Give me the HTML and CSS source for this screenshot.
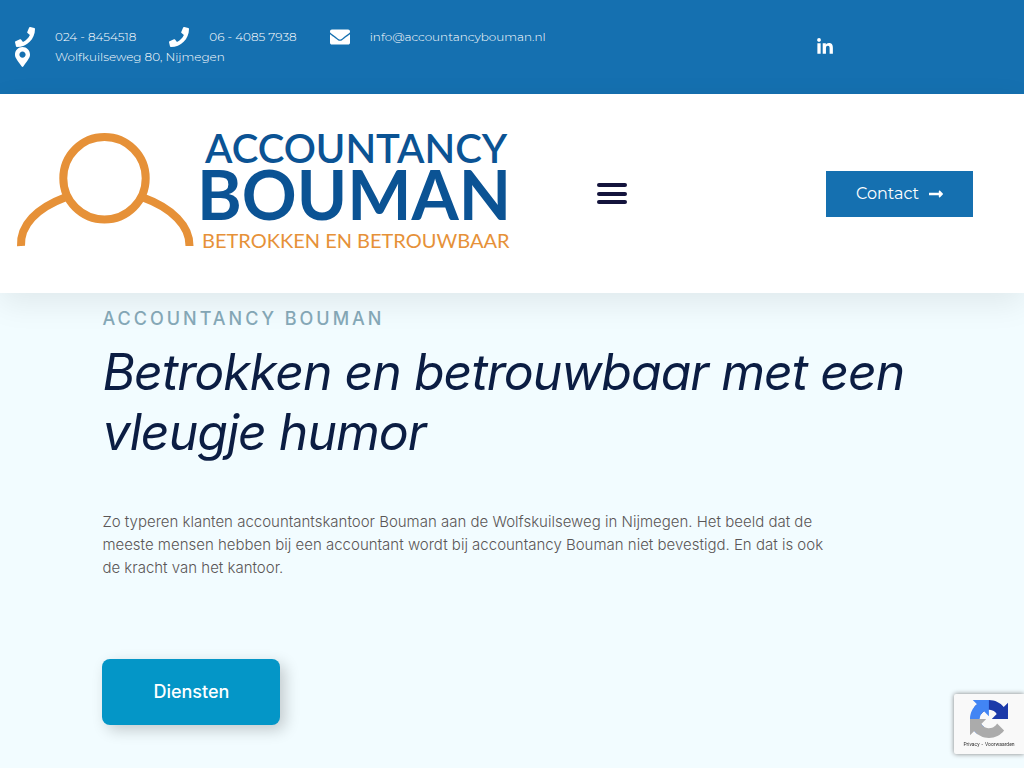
FILE: index.html
```html
<!DOCTYPE html>
<html lang="nl">
<head>
    <meta charset="UTF-8">
    <meta name="viewport" content="width=device-width, initial-scale=1.0">
    <title>Accountancy Bouman</title>
    <link rel="stylesheet" href="styles.css">
</head>
<body>
    <div class="topbar">
        <ul class="contact-list">
            <li>
                <a href="tel:0248454518">
                    <svg class="icon" viewBox="0 0 512 512"><path d="M493.4 24.6l-104-24c-11.3-2.6-22.9 3.3-27.5 13.9l-48 112c-4.2 9.8-1.4 21.3 6.9 28l60.6 49.6c-36 76.7-98.900 140.500-177.200 177.200l-49.600-60.600c-6.800-8.300-18.200-11.100-28-6.900l-112 48C3.900 366.500-2 378.100.6 389.400l24 104C27.100 504.200 36.700 512 48 512c256.100 0 464-207.500 464-464 0-11.200-7.700-20.900-18.600-23.400z"/></svg>
                    <span>024 - 8454518</span>
                </a>
            </li>
            <li>
                <a href="tel:0640857938">
                    <svg class="icon" viewBox="0 0 512 512"><path d="M493.4 24.6l-104-24c-11.3-2.6-22.9 3.3-27.5 13.9l-48 112c-4.2 9.8-1.4 21.3 6.9 28l60.6 49.6c-36 76.7-98.900 140.500-177.200 177.200l-49.600-60.600c-6.800-8.300-18.200-11.100-28-6.900l-112 48C3.900 366.500-2 378.100.6 389.400l24 104C27.100 504.200 36.700 512 48 512c256.100 0 464-207.500 464-464 0-11.200-7.700-20.900-18.600-23.400z"/></svg>
                    <span>06 - 4085 7938</span>
                </a>
            </li>
            <li>
                <a href="mailto:info@accountancybouman.nl">
                    <svg class="icon" viewBox="0 0 512 512"><path d="M502.3 190.800c3.900-3.100 9.700-.2 9.700 4.700V400c0 26.500-21.500 48-48 48H48c-26.500 0-48-21.500-48-48V195.600c0-5 5.700-7.800 9.700-4.700 22.400 17.400 52.100 39.500 154.100 113.600 21.100 15.400 56.700 47.800 92.200 47.600 35.700.3 72-32.800 92.300-47.600 102-74.100 131.600-96.300 154-113.700zM256 320c23.200.4 56.600-29.200 73.400-41.400 132.700-96.300 142.800-104.700 173.400-128.700 5.800-4.500 9.200-11.500 9.200-18.900v-19c0-26.500-21.500-48-48-48H48c-26.500 0-48 21.500-48 48v19c0 7.400 3.400 14.300 9.200 18.900 30.600 23.900 40.700 32.400 173.400 128.700 16.800 12.200 50.200 41.800 73.400 41.400z"/></svg>
                    <span>info@accountancybouman.nl</span>
                </a>
            </li>
            <li>
                <svg class="icon icon-pin" viewBox="0 0 384 512"><path d="M172.268 501.670C26.970 291.031 0 269.413 0 192 0 85.961 85.961 0 192 0s192 85.961 192 192c0 77.413-26.970 99.031-172.268 309.670-9.535 13.774-29.930 13.773-39.464 0zM192 272c44.183 0 80-35.817 80-80s-35.817-80-80-80-80 35.817-80 80 35.817 80 80 80z"/></svg>
                <span>Wolfkuilseweg 80, Nijmegen</span>
            </li>
        </ul>
        <div class="social">
            <a href="#" aria-label="LinkedIn">
                <svg viewBox="0 0 448 512"><path d="M100.280 448H7.400V148.900h92.880zM53.790 108.100C24.090 108.100 0 83.500 0 53.800a53.790 53.790 0 0 1 107.580 0c0 29.700-24.100 54.300-53.790 54.300zM447.900 448h-92.680V302.400c0-34.700-.7-79.200-48.290-79.200-48.290 0-55.690 37.700-55.690 76.700V448h-92.780V148.900h89.080v40.800h1.300c12.400-23.500 42.690-48.300 87.880-48.300 94 0 111.280 61.900 111.280 142.300V448z"/></svg>
            </a>
        </div>
    </div>

    <header class="header">
        <a class="logo" href="#" aria-label="Accountancy Bouman">
            <svg viewBox="0 0 497 126">
                <g fill="none" stroke="#e69138" stroke-width="8">
                    <circle cx="89.500" cy="47.300" r="41.200"/>
                    <path d="M50 66.500C22 77 5 94 6 115"/>
                    <path d="M128 66.500C157 77 175 95 174.500 115"/>
                </g>
                <g class="logo-name">
                    <text class="logo-top" x="190" y="32">ACCOUNTANCY</text>
                    <text class="logo-main" x="182" y="89">BOUMAN</text>
                </g>
                <text class="logo-tagline" x="187" y="117">BETROKKEN EN BETROUWBAAR</text>
            </svg>
        </a>
        <button class="menu-toggle" aria-label="Menu">
            <svg viewBox="0 0 30 24"><rect y="1" width="30" height="4" rx="2"/><rect y="10" width="30" height="4" rx="2"/><rect y="18" width="30" height="4" rx="2"/></svg>
        </button>
        <div class="header-action">
            <a class="btn-contact" href="#">
                <span>Contact</span>
                <svg viewBox="0 0 448 512"><path d="M313.941 216H12c-6.627 0-12 5.373-12 12v56c0 6.627 5.373 12 12 12h301.941v46.059c0 21.382 25.851 32.090 40.971 16.971l86.059-86.059c9.373-9.373 9.373-24.569 0-33.941l-86.059-86.059c-15.119-15.119-40.971-4.411-40.971 16.971V216z"/></svg>
            </a>
        </div>
    </header>

    <main class="hero">
        <p class="eyebrow">Accountancy Bouman</p>
        <h1>Betrokken en betrouwbaar met een vleugje humor</h1>
        <p class="intro">Zo typeren klanten accountantskantoor Bouman aan de Wolfskuilseweg in Nijmegen. Het beeld dat de meeste mensen hebben bij een accountant wordt bij accountancy Bouman niet bevestigd. En dat is ook de kracht van het kantoor.</p>
        <a class="btn-services" href="#">Diensten</a>
    </main>

    <div class="recaptcha">
        <svg viewBox="0 0 64 64">
            <path fill="#1c3aa9" d="M64 31.955l-.033-1.370V4.687l-7.160 7.160C50.948 4.674 42.033.093 32.050.093c-10.400 0-19.622 4.960-25.458 12.640l11.736 11.860a15.550 15.550 0 0 1 4.754-5.334c2.050-1.600 4.952-2.906 8.968-2.906.485 0 .860.057 1.135.163 4.976.393 9.288 3.140 11.828 7.124l-8.307 8.307L64 31.953"/>
            <path fill="#4285f4" d="M31.862.094l-1.370.033H4.594l7.160 7.160C4.580 13.147 0 22.060 0 32.046c0 10.400 4.960 19.622 12.640 25.458L24.500 45.768a15.550 15.550 0 0 1-5.334-4.754c-1.600-2.050-2.906-4.952-2.906-8.968 0-.485.057-.860.163-1.135.393-4.976 3.140-9.288 7.124-11.828l8.307 8.307L31.860.095"/>
            <path fill="#ababab" d="M.001 32.045l.033 1.370v25.898l7.160-7.160c5.860 7.173 14.774 11.754 24.760 11.754 10.400 0 19.622-4.960 25.458-12.640l-11.736-11.860a15.550 15.550 0 0 1-4.754 5.334c-2.050 1.600-4.952 2.906-8.968 2.906-.485 0-.860-.057-1.135-.163-4.976-.393-9.288-3.140-11.828-7.124l8.307-8.307c-10.522.040-22.400.066-27.295-.005"/>
        </svg>
        <div class="recaptcha-links"><a href="#">Privacy</a><span>-</span><a href="#">Voorwaarden</a></div>
    </div>
</body>
</html>
```
FILE: styles.css
```css
* {
    box-sizing: border-box;
}
body {
    margin: 0;
    min-height: 100vh;
    font-family: Inter, sans-serif;
    background-color: #f2fcff;
}
a {
    color: inherit;
    text-decoration: none;
}
.topbar {
    display: flex;
    align-items: center;
    min-height: 94px;
    background-color: #1570b0;
    color: #fff;
}
.contact-list {
    display: flex;
    flex-wrap: wrap;
    column-gap: 33px;
    width: 75%;
    margin: 0;
    padding: 0 15px;
    list-style: none;
    font-family: Montserrat, Inter, sans-serif;
    font-size: 12px;
    font-weight: 300;
    line-height: 20px;
}
.contact-list li,
.contact-list a {
    display: flex;
    align-items: center;
}
.icon {
    width: 20px;
    height: 20px;
    margin-right: 20px;
    fill: #fff;
}
.icon-pin {
    width: 15px;
    margin-right: 25px;
}
.social {
    width: 25%;
    padding-left: 49px;
}
.social svg {
    display: block;
    width: 16px;
    height: 18px;
    fill: #fff;
}
.header {
    position: relative;
    display: grid;
    grid-template-columns: 50% 200px 1fr;
    align-items: center;
    padding: 37px 0 36px;
    background-color: #fff;
    box-shadow: 0 10px 30px rgba(0, 0, 0, 0.08);
}
.logo {
    padding-left: 15px;
}
.logo svg {
    display: block;
    width: 100%;
    height: auto;
    overflow: visible;
}
.logo text {
    font-family: Lato, sans-serif;
}
.logo-name {
    fill: #0b5394;
}
.logo-top {
    font-size: 40px;
    font-weight: 600;
}
.logo-main {
    font-size: 68px;
    font-weight: 700;
}
.logo-tagline {
    fill: #e69138;
    font-size: 20px;
    font-weight: 400;
}
.menu-toggle {
    justify-self: center;
    padding: 0;
    border: 0;
    background: none;
    cursor: pointer;
}
.menu-toggle svg {
    display: block;
    width: 30px;
    height: 24px;
    fill: #14143c;
}
.header-action {
    display: flex;
    justify-content: flex-end;
    padding-right: 51px;
}
.btn-contact {
    display: flex;
    align-items: center;
    gap: 10px;
    padding: 13px 30px;
    background-color: #1570b0;
    color: #fff;
    font-family: Montserrat, Inter, sans-serif;
    font-size: 16px;
    line-height: 20px;
}
.btn-contact svg {
    width: 14px;
    height: 16px;
    fill: #fff;
}
.hero {
    padding: 14px 10% 43px;
}
.eyebrow {
    margin: 0;
    color: #86a9b8;
    font-size: 18px;
    font-weight: 500;
    line-height: 24px;
    letter-spacing: 3px;
    text-transform: uppercase;
}
h1 {
    margin: 11px 0 48px;
    color: #0b1d43;
    font-size: 50px;
    font-style: italic;
    font-weight: 400;
    line-height: 60px;
    letter-spacing: -1px;
}
.intro {
    max-width: 740px;
    margin: 0 0 80px;
    color: #5a5656;
    font-size: 15px;
    font-weight: 300;
    line-height: 23px;
}
.btn-services {
    display: inline-block;
    padding: 21px 51px;
    border-radius: 8px;
    background-color: #0496c7;
    box-shadow: 5px 5px 15px rgba(0, 0, 0, 0.2);
    color: #fff;
    font-size: 18px;
    font-weight: 500;
    line-height: 24px;
}
.recaptcha {
    position: fixed;
    right: 0;
    bottom: 14px;
    width: 70px;
    height: 60px;
    padding-top: 5px;
    border-radius: 2px 0 0 2px;
    background-color: #f9f9f9;
    box-shadow: 0 0 5px gray;
    text-align: center;
}
.recaptcha svg {
    display: block;
    width: 38px;
    height: 40px;
    margin: 0 auto;
}
.recaptcha-links {
    display: flex;
    justify-content: center;
    gap: 2px;
    color: #333;
    font-family: Roboto, sans-serif;
    font-size: 5px;
    line-height: 10px;
}
```
